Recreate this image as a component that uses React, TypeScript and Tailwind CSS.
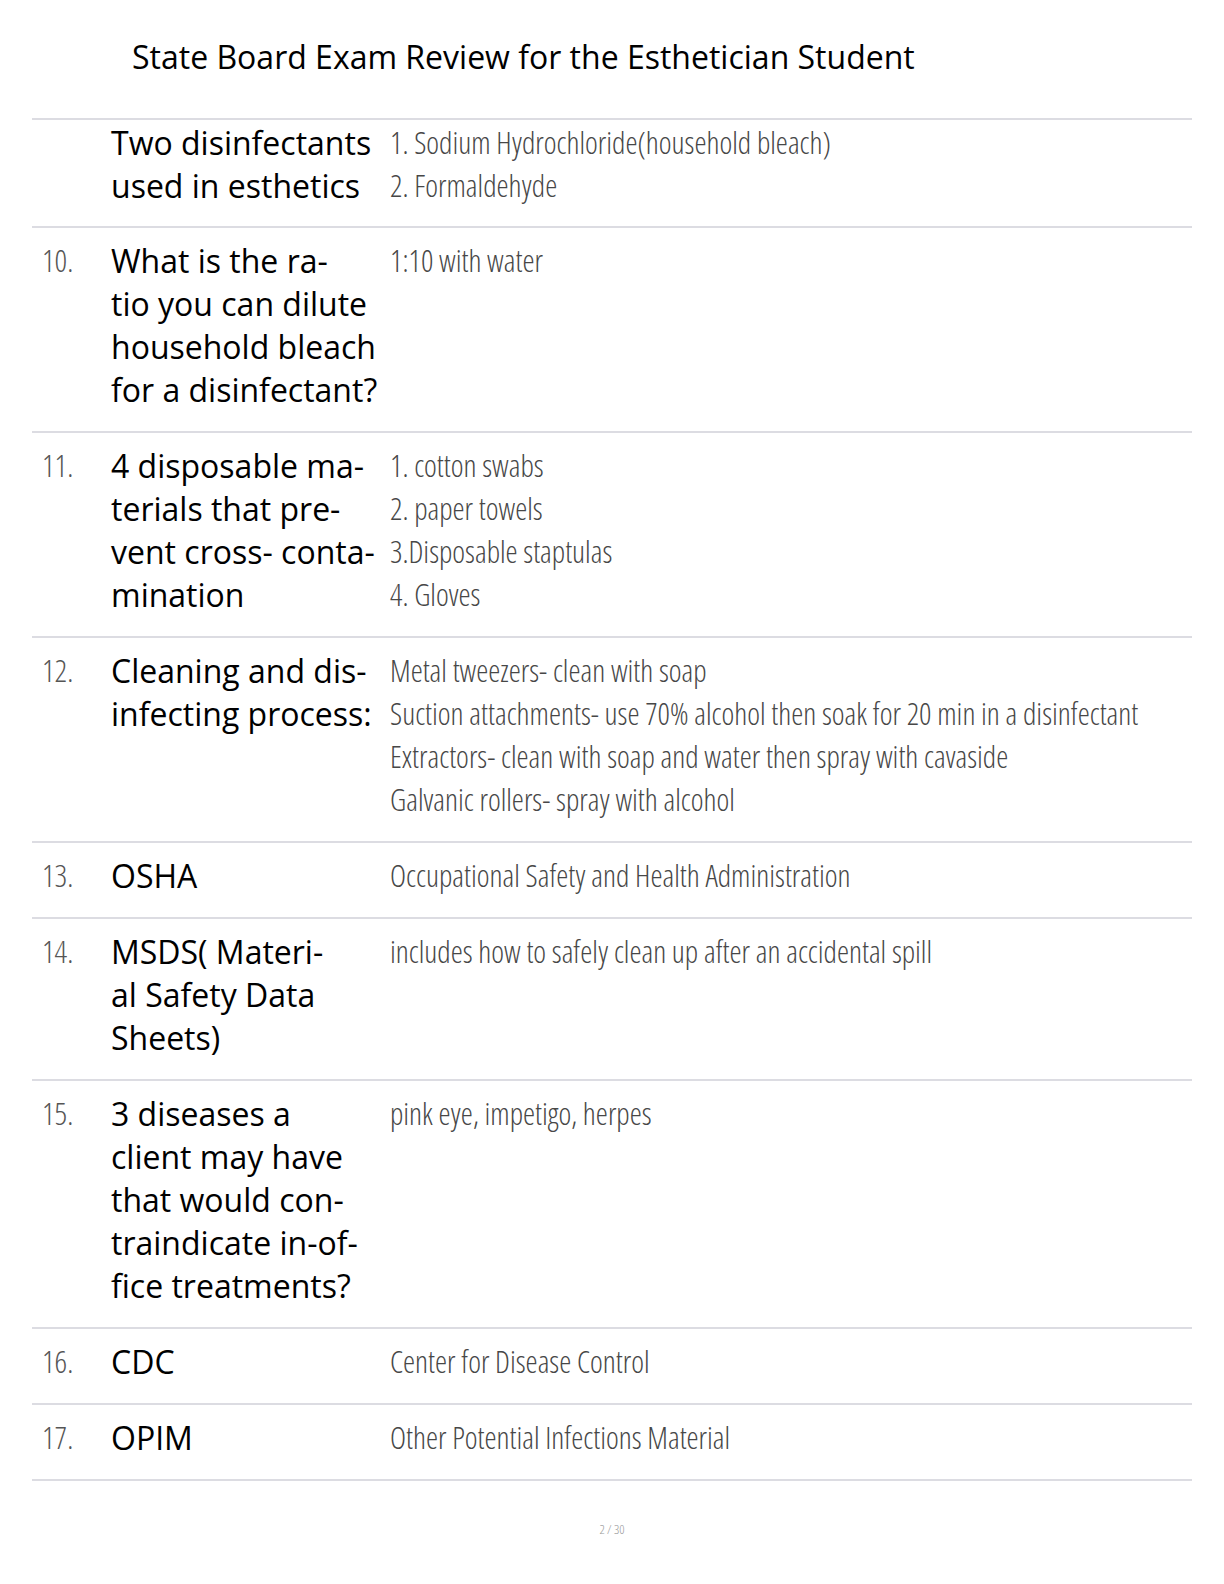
import React from "react";

type Row = {
  num?: string;
  term: string[];
  answer: string[];
  first?: boolean;
};

const rows: Row[] = [
  {
    term: ["Two disinfectants", "used in esthetics"],
    answer: ["1. Sodium Hydrochloride(household bleach)", "2. Formaldehyde"],
    first: true,
  },
  {
    num: "10.",
    term: ["What is the ra-", "tio you can dilute", "household bleach", "for a disinfectant?"],
    answer: ["1:10 with water"],
  },
  {
    num: "11.",
    term: ["4 disposable ma-", "terials that pre-", "vent cross- conta-", "mination"],
    answer: ["1. cotton swabs", "2. paper towels", "3.Disposable staptulas", "4. Gloves"],
  },
  {
    num: "12.",
    term: ["Cleaning and dis-", "infecting process:"],
    answer: [
      "Metal tweezers- clean with soap",
      "Suction attachments- use 70% alcohol then soak for 20 min in a disinfectant",
      "Extractors- clean with soap and water then spray with cavaside",
      "Galvanic rollers- spray with alcohol",
    ],
  },
  { num: "13.", term: ["OSHA"], answer: ["Occupational Safety and Health Administration"] },
  {
    num: "14.",
    term: ["MSDS( Materi-", "al Safety Data", "Sheets)"],
    answer: ["includes how to safely clean up after an accidental spill"],
  },
  {
    num: "15.",
    term: ["3 diseases a", "client may have", "that would con-", "traindicate in-of-", "fice treatments?"],
    answer: ["pink eye, impetigo, herpes"],
  },
  { num: "16.", term: ["CDC"], answer: ["Center for Disease Control"] },
  { num: "17.", term: ["OPIM"], answer: ["Other Potential Infections Material"] },
];

const condensed = "font-['Open_Sans',sans-serif] font-light [font-stretch:75%]";

export default function App() {
  return (
    <div className="w-[1224px] min-h-[1584px] bg-white font-['Open_Sans',sans-serif]">
      <h1 className="pl-[132px] pt-[37px] text-[32px] leading-[40px] text-black font-normal">
        State Board Exam Review for the Esthetician Student
      </h1>

      <div className="mx-[32px] mt-[41px] border-t-2 border-[#dcdce2]">
        {rows.map((row, i) => (
          <div
            key={i}
            className={`flex border-b-2 border-[#dcdce2] pl-[10px] ${
              row.first ? "pt-[1px] pb-[19px]" : "pt-[11px] pb-[20px]"
            }`}
          >
            <div className={`w-[69px] shrink-0 text-[31px] leading-[43px] text-[#555] ${condensed}`}>
              {row.num}
            </div>
            <div className="w-[279px] shrink-0 text-[32px] leading-[43px] font-medium text-black whitespace-nowrap">
              {row.term.map((t, j) => (
                <div key={j}>{t}</div>
              ))}
            </div>
            <div className={`flex-1 text-[30.5px] leading-[43px] text-[#474747] ${condensed}`}>
              {row.answer.map((a, j) => (
                <div key={j} className="whitespace-nowrap">
                  {a}
                </div>
              ))}
            </div>
          </div>
        ))}
      </div>

      <div className={`mt-[39px] text-center text-[13px] text-[#999] ${condensed}`}>2 / 30</div>
    </div>
  );
}
